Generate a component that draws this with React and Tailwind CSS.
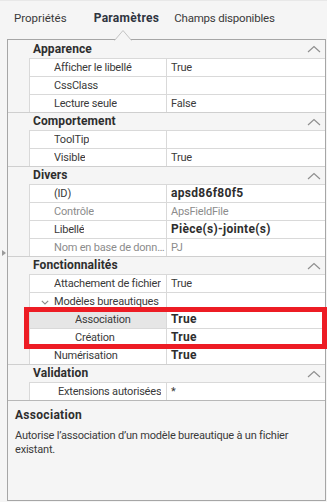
import React from "react";

const sections = [
  {
    title: "Apparence",
    rows: [
      { n: "Afficher le libellé", v: "True" },
      { n: "CssClass", v: "" },
      { n: "Lecture seule", v: "False" },
    ],
  },
  {
    title: "Comportement",
    rows: [
      { n: "ToolTip", v: "" },
      { n: "Visible", v: "True" },
    ],
  },
  {
    title: "Divers",
    rows: [
      { n: "(ID)", v: "apsd86f80f5", bold: true },
      { n: "Contrôle", v: "ApsFieldFile", disabled: true },
      { n: "Libellé", v: "Pièce(s)-jointe(s)", bold: true },
      { n: "Nom en base de données", v: "PJ", disabled: true },
    ],
  },
  {
    title: "Fonctionnalités",
    rows: [
      { n: "Attachement de fichier", v: "True" },
      { n: "Modèles bureautiques", v: "", expand: true },
      { n: "Association", v: "True", bold: true, child: true, selected: true },
      { n: "Création", v: "True", bold: true, child: true },
      { n: "Numérisation", v: "True", bold: true },
    ],
  },
  {
    title: "Validation",
    rows: [{ n: "Extensions autorisées", v: "*", indent: true }],
  },
];

function ChevronUp() {
  return (
    <svg width="14" height="8" viewBox="0 0 14 8" className="block">
      <path d="M1 7 L7 1.5 L13 7" fill="none" stroke="#8f8f8f" strokeWidth="1.2" />
    </svg>
  );
}

function ChevronDown() {
  return (
    <svg width="8" height="5" viewBox="0 0 8 5" className="block">
      <path d="M0.8 0.8 L4 4 L7.2 0.8" fill="none" stroke="#8a8a8a" strokeWidth="1.1" />
    </svg>
  );
}

function Row({ r }) {
  const nameColor = r.disabled ? "text-[#8c8c8c]" : "text-[#3a3a3a]";
  const valColor = r.disabled ? "text-[#8c8c8c]" : r.bold ? "text-[#2e2e2e]" : "text-[#3a3a3a]";
  const pl = r.child ? "pl-[45px]" : r.indent ? "pl-[28px]" : r.expand ? "pl-[11px]" : "pl-[24px]";
  return (
    <div className="flex h-[18px]">
      <div className="w-[21px] shrink-0" />
      <div
        className={`flex w-[137px] shrink-0 items-center border-t border-l border-[#d9d9d9] pr-[1px] ${pl} ${
          r.selected ? "bg-[#e6e6e6]" : "bg-white"
        }`}
      >
        {r.expand && (
          <span className="mr-[5px] mt-[2px]">
            <ChevronDown />
          </span>
        )}
        <span className={`truncate whitespace-nowrap leading-[17px] tracking-[-0.2px] ${nameColor}`}>{r.n}</span>
      </div>
      <div
        className={`flex flex-1 items-center border-t border-l border-[#d9d9d9] bg-white pl-[4px] leading-[17px] ${valColor} ${
          r.bold ? "text-[12px] font-bold tracking-[0.3px]" : "tracking-[-0.2px]"
        }`}
      >
        {r.v}
      </div>
    </div>
  );
}

export default function App() {
  return (
    <div
      className="relative h-[502px] w-[327px] overflow-hidden border-t border-[#e8e8e8] bg-[#f5f5f5] text-[11px]"
      style={{ fontFamily: "Roboto, 'Noto Sans', sans-serif" }}
    >
      {/* tabs */}
      <div className="flex h-[38px] items-start pt-[9px] text-[#3a3a3a]">
        <span className="ml-[14px] text-[11.5px] leading-[16px]">Propriétés</span>
        <span className="ml-[27px] text-[12px] font-bold leading-[16px] tracking-[0.3px] text-[#2f3440]">
          Paramètres
        </span>
        <span className="ml-[15px] text-[11.5px] leading-[16px] tracking-[-0.2px]">Champs disponibles</span>
      </div>

      {/* active tab pointer */}
      <svg
        className="absolute left-[114px] top-[28px]"
        width="18"
        height="12"
        viewBox="0 0 18 12"
      >
        <path d="M0.5 11.5 L9 1.5 L17.5 11.5" fill="#f5f5f5" stroke="#c4c4c4" strokeWidth="1" />
      </svg>

      {/* splitter grip */}
      <svg className="absolute left-[2px] top-[249px]" width="4" height="6" viewBox="0 0 4 6">
        <path d="M0 0 L4 3 L0 6 Z" fill="#9a9a9a" />
      </svg>

      {/* grid box */}
      <div className="ml-[7px] flex h-[462px] w-[319px] flex-col border border-[#a6a6a6]">
        {sections.map((s, i) => (
          <div key={s.title}>
            <div
              className={`flex h-[18px] items-center justify-between pl-[25px] pr-[4px] text-[12px] ${
                i > 0 ? "border-t border-[#cfcfcf]" : ""
              }`}
            >
              <span className="font-bold leading-[17px] tracking-[0.1px] text-[#2e2e2e]">{s.title}</span>
              <ChevronUp />
            </div>
            {s.rows.map((r) => (
              <Row key={r.n} r={r} />
            ))}
          </div>
        ))}
        <div className="flex-1 border-t border-[#b8b8b8] bg-[#f5f5f5] px-[7px] pt-[6px]">
          <div className="text-[12px] font-bold leading-[16px] tracking-[0.3px] text-[#2e2e2e]">Association</div>
          <div className="mt-[6px] leading-[14px] tracking-[-0.2px] text-[#3a3a3a]">
            Autorise l’association d’un modèle bureautique à un fichier existant.
          </div>
        </div>
      </div>

      {/* highlight overlay */}
      <div className="absolute left-[24px] top-[306px] h-[42px] w-[303px] border-[5px] border-[#ed1c24]" />
    </div>
  );
}
